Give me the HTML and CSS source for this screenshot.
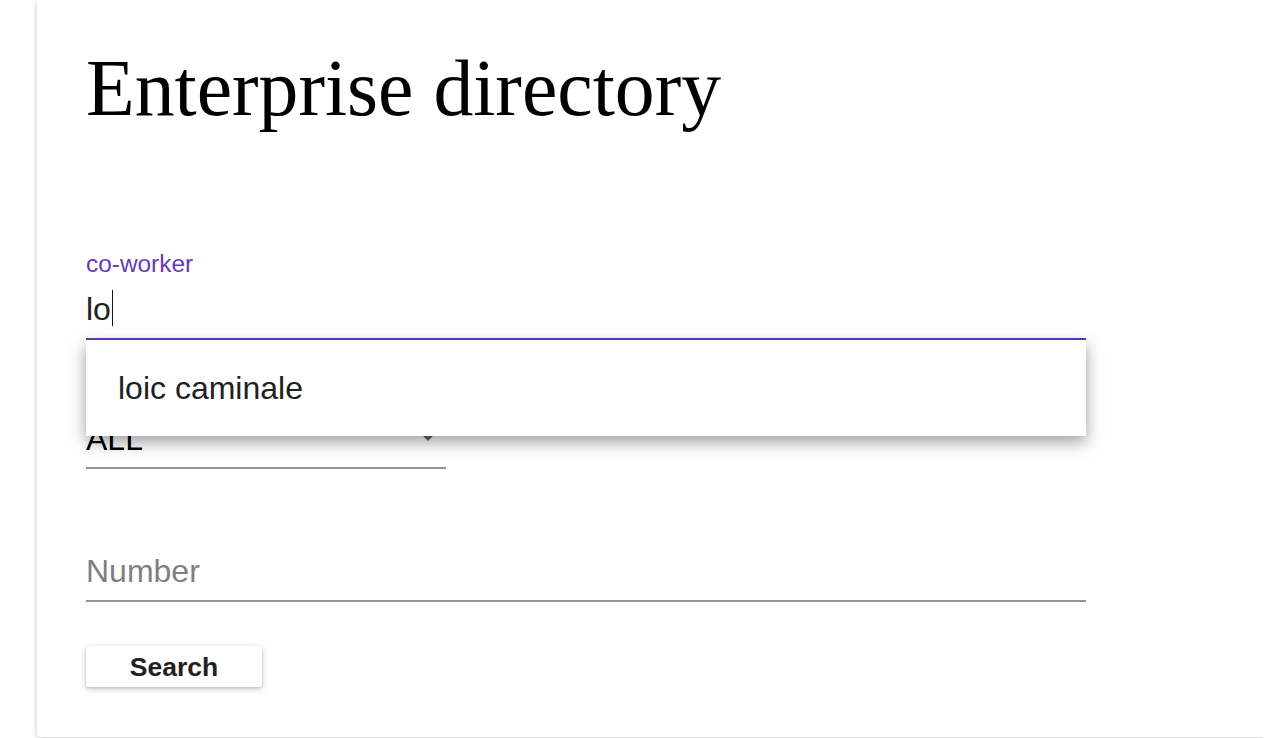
FILE: index.html
```html
<!DOCTYPE html>
<html lang="en">
<head>
<meta charset="utf-8">
<title>Enterprise directory</title>
<link rel="stylesheet" href="styles.css">
</head>
<body>
<div class="page">
  <div class="card">
    <h1 class="title">Enterprise directory</h1>
    <form class="form">
      <div class="field field-coworker">
        <label class="float-label">co-worker</label>
        <div class="input-row"><span class="value">lo</span><span class="caret"></span></div>
        <div class="underline underline-focus"></div>
        <div class="menu">
          <div class="menu-item">loic caminale</div>
        </div>
      </div>
      <div class="field field-select">
        <div class="input-row select-row"><span class="value">ALL</span>
          <svg class="arrow" width="48" height="48" viewBox="0 0 24 24"><path d="M7 10l5 5 5-5z" fill="#666"/></svg>
        </div>
        <div class="underline underline-short"></div>
      </div>
      <div class="field field-number">
        <div class="input-row"><span class="placeholder">Number</span></div>
        <div class="underline"></div>
      </div>
      <button type="button" class="btn">Search</button>
    </form>
  </div>
</div>
</body>
</html>
```

FILE: styles.css
```css
html, body {
  margin: 0;
  padding: 0;
  background: #fff;
  overflow: hidden;
}
.page {
  padding-left: 37px;
  height: 738px;
}
.card {
  width: 1227px;
  height: 737px;
  box-sizing: border-box;
  background: #fff;
  border-radius: 0 0 0 3px;
  box-shadow: 0 1px 6px rgba(0,0,0,0.12), 0 1px 4px rgba(0,0,0,0.12);
  padding: 48px 0 0 49px;
}
.title {
  margin: 0;
  font-family: "Liberation Serif", "Times New Roman", serif;
  font-weight: normal;
  font-size: 79.7px;
  line-height: 80px;
  color: #000;
}
.form {
  width: 1000px;
  font-family: "Liberation Sans", Arial, sans-serif;
}
.field {
  position: relative;
}
.field-coworker {
  margin-top: 124px;
}
.float-label {
  display: block;
  font-size: 24.4px;
  line-height: 24px;
  color: #673ab7;
}
.input-row {
  height: 32px;
  font-size: 32px;
  line-height: 32px;
  color: #212121;
  display: flex;
  align-items: flex-start;
}
.field-coworker .input-row {
  margin-top: 17px;
}
.caret {
  display: inline-block;
  width: 1.5px;
  height: 36px;
  background: #111;
  margin-top: -3px;
  margin-left: 1px;
}
.underline {
  height: 2px;
  background: #949494;
  margin-top: 13px;
}
.underline-focus {
  background: #673ab7;
}
.menu {
  position: absolute;
  left: 0;
  top: 100%;
  width: 1000px;
  height: 96px;
  background: #fff;
  z-index: 5;
  box-shadow: 0 6px 20px rgba(0,0,0,0.19), 0 6px 12px rgba(0,0,0,0.22);
}
.menu-item {
  padding-left: 32px;
  font-size: 32px;
  line-height: 96px;
  color: #212121;
}
.field-select {
  width: 360px;
  margin-top: 83px;
}
.select-row {
  position: relative;
  color: #000;
}
.arrow {
  position: absolute;
  right: -6px;
  top: -12px;
}
.underline-short {
  margin-top: 12px;
}
.field-number {
  margin-top: 86px;
}
.placeholder {
  color: #7f7f7f;
}
.btn {
  display: block;
  margin-top: 44px;
  width: 176px;
  height: 41px;
  padding: 1px 0 0;
  border: 0;
  border-radius: 2px;
  background: #fff;
  font-family: "Liberation Sans", Arial, sans-serif;
  font-weight: bold;
  font-size: 26.5px;
  line-height: 40px;
  color: #212121;
  box-shadow: 0 2px 6px rgba(0,0,0,0.2), 0 1px 3px rgba(0,0,0,0.14);
}
```
